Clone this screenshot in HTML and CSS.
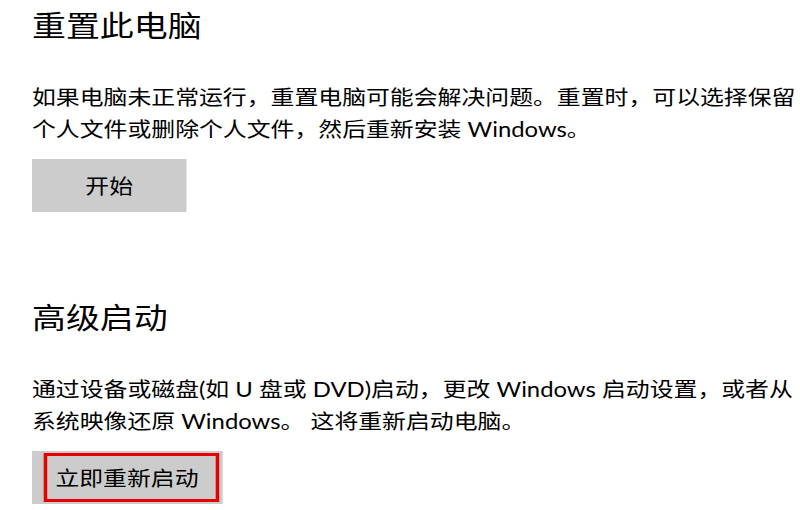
FILE: index.html
```html
<!DOCTYPE html>
<html lang="zh-CN">
<head>
<meta charset="utf-8">
<title>恢复</title>
<link rel="stylesheet" href="styles.css">
</head>
<body>
<main class="page">
  <section class="group">
    <h2 class="title">重置此电脑</h2>
    <p class="desc">如果电脑未正常运行，重置电脑可能会解决问题。重置时，可以选择保留个人文件或删除个人文件，然后重新安装 Windows。</p>
    <button class="btn btn-start" type="button">开始</button>
  </section>
  <section class="group group-advanced">
    <h2 class="title">高级启动</h2>
    <p class="desc">通过设备或磁盘(如 U 盘或 DVD)启动，更改 Windows 启动设置，或者从系统映像还原 Windows。 这将重新启动电脑。</p>
    <button class="btn btn-restart" type="button"><span class="mark">立即重新启动</span></button>
  </section>
</main>
</body>
</html>
```
FILE: styles.css
```css
html, body {
  margin: 0;
  padding: 0;
  background: #ffffff;
}

body {
  font-family: Lato, "Noto Sans CJK SC", sans-serif;
  color: #000000;
  overflow: hidden;
}

.page {
  margin-left: 32px;
  padding-top: 6px;
  width: 657px;
  transform: scaleX(1.17);
  transform-origin: 0 0;
  display: flex;
  flex-direction: column;
}

.group {
  display: flex;
  flex-direction: column;
  align-items: flex-start;
}

.group-advanced {
  margin-top: 86px;
}

.title {
  margin: 0;
  font-size: 29px;
  line-height: 40px;
  font-weight: 400;
  letter-spacing: 0;
}

.desc {
  margin: 35px 0 0;
  font-size: 20.4px;
  line-height: 32px;
}

.desc .latin {
  letter-spacing: 0;
}

.btn {
  margin-top: 14px;
  border: 0;
  background: #cccccc;
  font-family: inherit;
  color: #000000;
  font-size: 20.4px;
  line-height: 32px;
  height: 53px;
  cursor: default;
}

.btn-start {
  width: 132px;
  padding: 0;
}

.btn-restart {
  padding: 2px 3.5px 2px 10px;
  display: flex;
  align-items: stretch;
}

.mark {
  border: 3px solid #e60000;
  padding: 0 14.5px 0 7px;
  display: flex;
  align-items: center;
}
```
